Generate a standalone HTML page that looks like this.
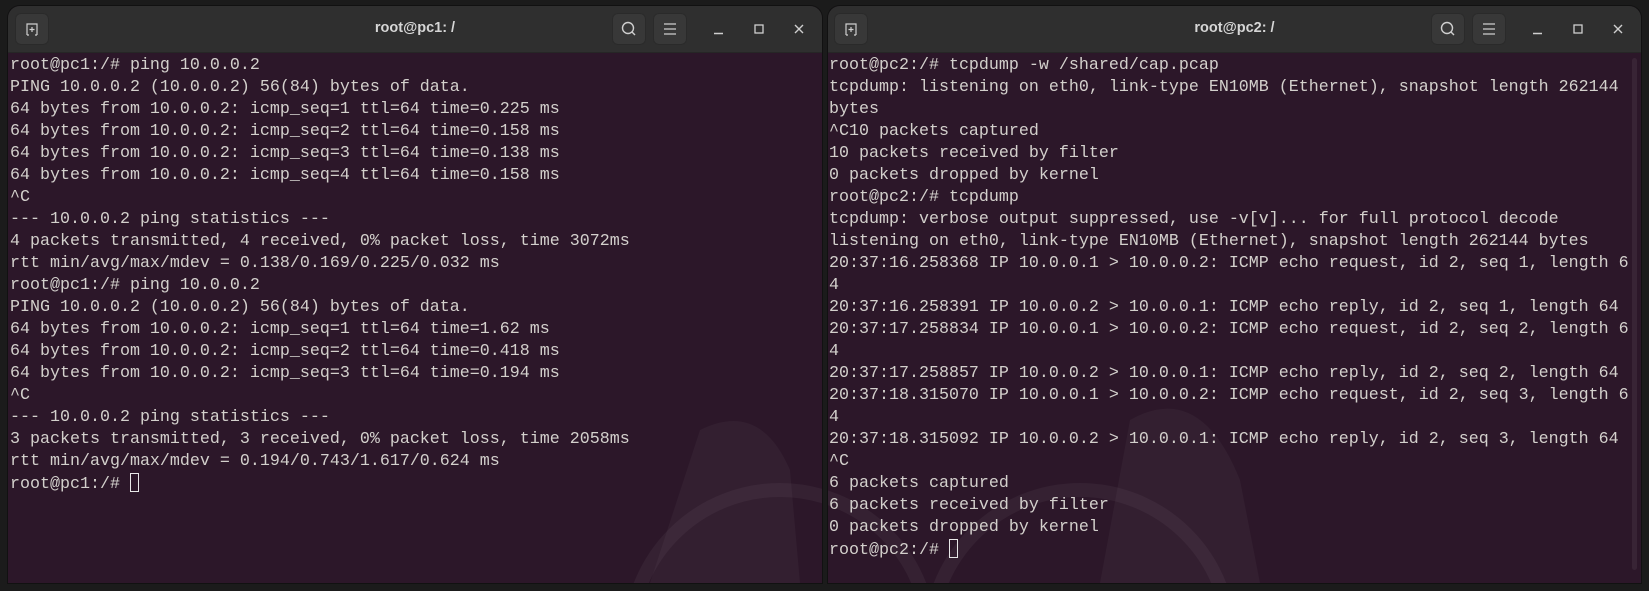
<!DOCTYPE html>
<html style="overflow:hidden;height:591px"><head><meta charset="utf-8"><style>
body{margin:0;width:1649px;height:591px;background:#1b1b1b;position:relative;overflow:hidden;font-family:"Liberation Sans",sans-serif}
.win{position:absolute;top:6px;height:577px;background:#2c1729;border-radius:12px 12px 0 0;overflow:hidden;box-shadow:0 0 0 1px #111}
.tb{position:absolute;left:0;right:0;top:0;height:46px;background:#2f2f2f;border-bottom:1px solid #262626}
.title{position:absolute;left:0;right:0;top:14px;text-align:center;color:#d6d6d6;font-weight:bold;font-size:14.5px}
.btn{position:absolute;top:7px;width:34px;height:32px;background:#383838;border-radius:6px;box-shadow:inset 0 0 0 1px #2a2a2a}
.btn svg,.ic svg{position:absolute;left:0;top:0}
.ic{position:absolute;top:13px;width:20px;height:20px}
pre{position:absolute;margin:0;top:49px;font-family:"Liberation Mono",monospace;font-size:16.67px;line-height:22px;color:#d3d0cc;white-space:pre}
.cur{display:inline-block;width:9px;height:19px;border:1px solid #e8e8e8;vertical-align:-4px;box-sizing:border-box}
.wm{position:absolute;left:0;top:0;pointer-events:none}
</style></head><body>

<div class="win" style="left:8px;width:814px">
<svg class="wm" width="814" height="577"><g fill="none" stroke="rgba(255,255,255,0.045)" stroke-width="14"><circle cx="772" cy="634" r="150"/></g><path d="M692 424 Q752 394 782 464 L792 577 L642 577 Z" fill="rgba(255,255,255,0.035)"/></svg>
<div class="tb">
 <div class="btn" style="left:7px"><svg width="34" height="32"><path d="M12 22 V11 H22 V22 M14 22 H12 M22 22 H20 M17 14 V19 M14.5 16.5 H19.5" stroke="#cfcfcf" stroke-width="1.2" fill="none"/></svg></div>
 <div class="title">root@pc1: /</div>
 <div class="btn" style="left:604px"><svg width="34" height="32"><circle cx="16" cy="15" r="5.5" stroke="#cfcfcf" stroke-width="1.4" fill="none"/><path d="M20 19 L23 22" stroke="#cfcfcf" stroke-width="1.4"/></svg></div>
 <div class="btn" style="left:645px"><svg width="34" height="32"><path d="M11 11 H23 M11 16 H23 M11 21 H23" stroke="#cfcfcf" stroke-width="1.2"/></svg></div>
 <div class="ic" style="left:701px"><svg width="20" height="20"><path d="M5 14.5 H14" stroke="#cfcfcf" stroke-width="1.4"/></svg></div>
 <div class="ic" style="left:741px"><svg width="20" height="20"><rect x="6" y="6" width="8" height="8" stroke="#cfcfcf" stroke-width="1.3" fill="none"/></svg></div>
 <div class="ic" style="left:781px"><svg width="20" height="20"><path d="M6 6 L14 14 M14 6 L6 14" stroke="#cfcfcf" stroke-width="1.4"/></svg></div>
</div>
<pre style="left:2px">root@pc1:/# ping 10.0.0.2
PING 10.0.0.2 (10.0.0.2) 56(84) bytes of data.
64 bytes from 10.0.0.2: icmp_seq=1 ttl=64 time=0.225 ms
64 bytes from 10.0.0.2: icmp_seq=2 ttl=64 time=0.158 ms
64 bytes from 10.0.0.2: icmp_seq=3 ttl=64 time=0.138 ms
64 bytes from 10.0.0.2: icmp_seq=4 ttl=64 time=0.158 ms
^C
--- 10.0.0.2 ping statistics ---
4 packets transmitted, 4 received, 0% packet loss, time 3072ms
rtt min/avg/max/mdev = 0.138/0.169/0.225/0.032 ms
root@pc1:/# ping 10.0.0.2
PING 10.0.0.2 (10.0.0.2) 56(84) bytes of data.
64 bytes from 10.0.0.2: icmp_seq=1 ttl=64 time=1.62 ms
64 bytes from 10.0.0.2: icmp_seq=2 ttl=64 time=0.418 ms
64 bytes from 10.0.0.2: icmp_seq=3 ttl=64 time=0.194 ms
^C
--- 10.0.0.2 ping statistics ---
3 packets transmitted, 3 received, 0% packet loss, time 2058ms
rtt min/avg/max/mdev = 0.194/0.743/1.617/0.624 ms
root@pc1:/# <span class="cur"></span></pre>
</div>

<div class="win" style="left:828px;width:813px">
<svg class="wm" width="813" height="577"><g fill="none" stroke="rgba(255,255,255,0.045)" stroke-width="14"><circle cx="252" cy="634" r="150"/><circle cx="-48" cy="634" r="150"/></g><path d="M302 414 Q372 374 412 474 L432 577 L272 577 Z" fill="rgba(255,255,255,0.035)"/></svg>
<div class="tb">
 <div class="btn" style="left:6px"><svg width="34" height="32"><path d="M12 22 V11 H22 V22 M14 22 H12 M22 22 H20 M17 14 V19 M14.5 16.5 H19.5" stroke="#cfcfcf" stroke-width="1.2" fill="none"/></svg></div>
 <div class="title">root@pc2: /</div>
 <div class="btn" style="left:603px"><svg width="34" height="32"><circle cx="16" cy="15" r="5.5" stroke="#cfcfcf" stroke-width="1.4" fill="none"/><path d="M20 19 L23 22" stroke="#cfcfcf" stroke-width="1.4"/></svg></div>
 <div class="btn" style="left:644px"><svg width="34" height="32"><path d="M11 11 H23 M11 16 H23 M11 21 H23" stroke="#cfcfcf" stroke-width="1.2"/></svg></div>
 <div class="ic" style="left:700px"><svg width="20" height="20"><path d="M5 14.5 H14" stroke="#cfcfcf" stroke-width="1.4"/></svg></div>
 <div class="ic" style="left:740px"><svg width="20" height="20"><rect x="6" y="6" width="8" height="8" stroke="#cfcfcf" stroke-width="1.3" fill="none"/></svg></div>
 <div class="ic" style="left:780px"><svg width="20" height="20"><path d="M6 6 L14 14 M14 6 L6 14" stroke="#cfcfcf" stroke-width="1.4"/></svg></div>
</div>
<pre style="left:1px">root@pc2:/# tcpdump -w /shared/cap.pcap
tcpdump: listening on eth0, link-type EN10MB (Ethernet), snapshot length 262144
bytes
^C10 packets captured
10 packets received by filter
0 packets dropped by kernel
root@pc2:/# tcpdump
tcpdump: verbose output suppressed, use -v[v]... for full protocol decode
listening on eth0, link-type EN10MB (Ethernet), snapshot length 262144 bytes
20:37:16.258368 IP 10.0.0.1 &gt; 10.0.0.2: ICMP echo request, id 2, seq 1, length 6
4
20:37:16.258391 IP 10.0.0.2 &gt; 10.0.0.1: ICMP echo reply, id 2, seq 1, length 64
20:37:17.258834 IP 10.0.0.1 &gt; 10.0.0.2: ICMP echo request, id 2, seq 2, length 6
4
20:37:17.258857 IP 10.0.0.2 &gt; 10.0.0.1: ICMP echo reply, id 2, seq 2, length 64
20:37:18.315070 IP 10.0.0.1 &gt; 10.0.0.2: ICMP echo request, id 2, seq 3, length 6
4
20:37:18.315092 IP 10.0.0.2 &gt; 10.0.0.1: ICMP echo reply, id 2, seq 3, length 64
^C
6 packets captured
6 packets received by filter
0 packets dropped by kernel
root@pc2:/# <span class="cur"></span></pre>
<div style="position:absolute;right:4px;top:52px;width:5px;height:512px;border-radius:3px;background:rgba(255,255,255,0.06)"></div>
</div>
</body></html>
